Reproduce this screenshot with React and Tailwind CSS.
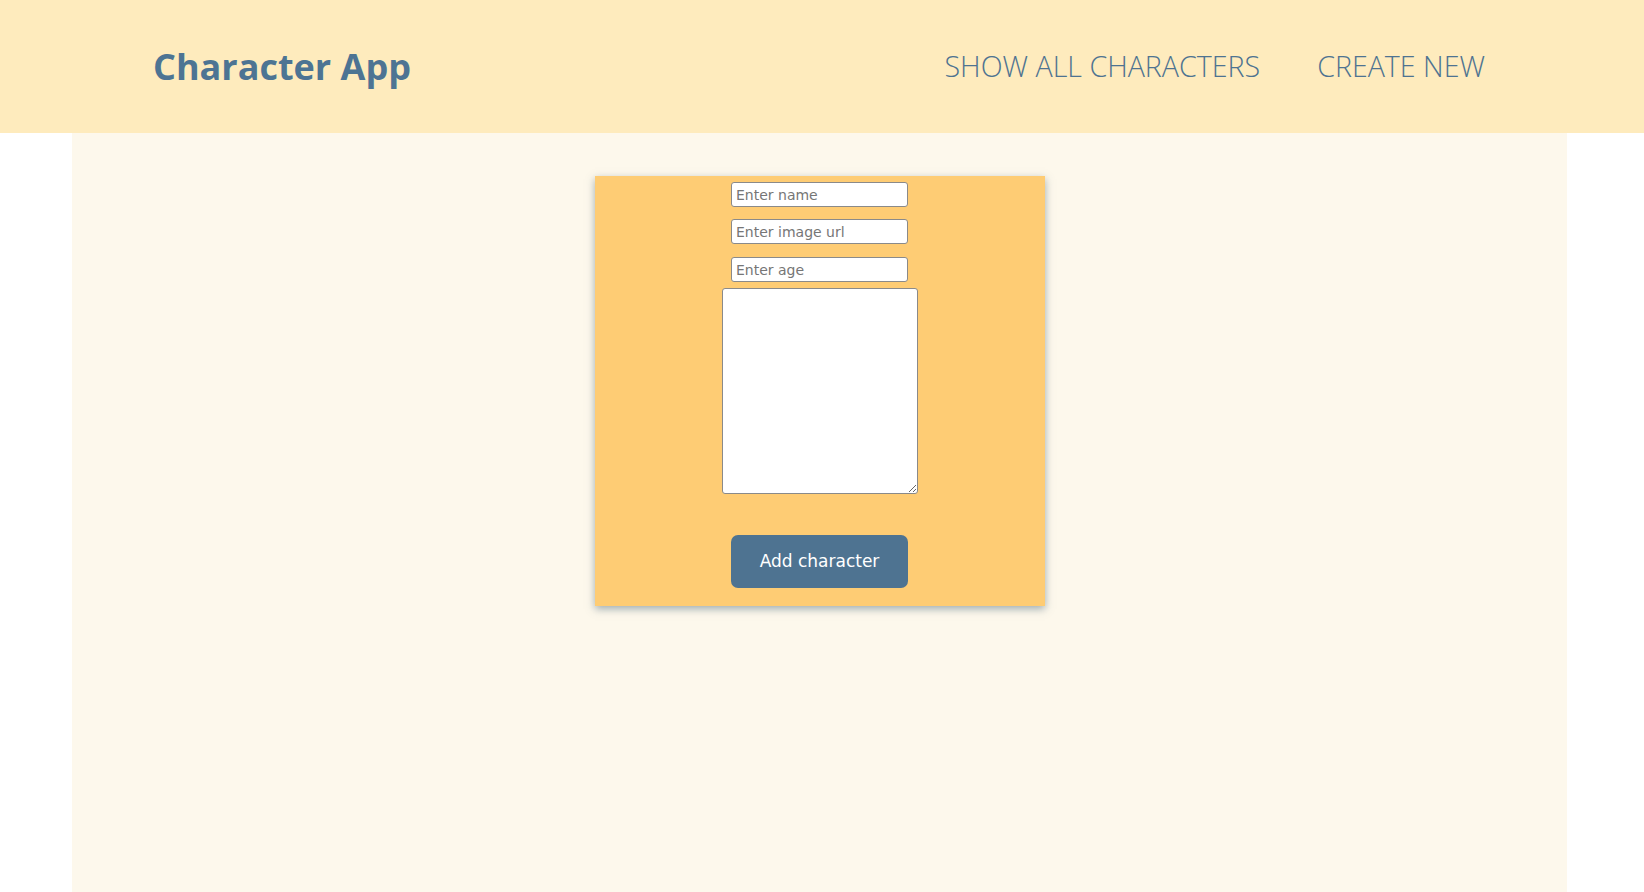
import React, { useState } from 'react';

const sans = { fontFamily: '"Open Sans", "Noto Sans", sans-serif' };
const field = { fontFamily: '"DejaVu Sans", Verdana, sans-serif' };

export default function App() {
  const [form, setForm] = useState({ name: '', image: '', age: '', description: '' });

  const update = (key) => (e) => setForm({ ...form, [key]: e.target.value });

  return (
    <div className="min-h-screen flex flex-col bg-white" style={sans}>
      <header className="h-[133px] shrink-0 bg-[#feebbd] flex items-center justify-between pl-[153px] pr-[159px]">
        <h1 className="text-[36px] font-bold text-[#4d7493] leading-none">Character App</h1>
        <nav className="flex items-center gap-[57px] text-[28.6px] font-[350] text-[#4e7391] leading-none">
          <a href="#">SHOW ALL CHARACTERS</a>
          <a href="#">CREATE NEW</a>
        </nav>
      </header>

      <main className="ml-[72px] w-[1495px] flex-1 bg-[#fdf8ec] pt-[43px]">
        <form
          onSubmit={(e) => e.preventDefault()}
          className="mx-auto w-[450px] bg-[#fecc74] shadow-[0_3px_8px_rgba(70,100,120,0.5)] flex flex-col items-center pt-[6px] pb-[18px]"
          style={field}
        >
          <input
            type="text"
            placeholder="Enter name"
            value={form.name}
            onChange={update('name')}
            className="w-[177px] h-[25px] bg-white border border-[#8a8a8a] rounded-[3px] px-[4px] text-[14px] text-black placeholder:text-[#767676] outline-none"
          />
          <input
            type="text"
            placeholder="Enter image url"
            value={form.image}
            onChange={update('image')}
            className="mt-[12px] w-[177px] h-[25px] bg-white border border-[#8a8a8a] rounded-[3px] px-[4px] text-[14px] text-black placeholder:text-[#767676] outline-none"
          />
          <input
            type="text"
            placeholder="Enter age"
            value={form.age}
            onChange={update('age')}
            className="mt-[13px] w-[177px] h-[25px] bg-white border border-[#8a8a8a] rounded-[3px] px-[4px] text-[14px] text-black placeholder:text-[#767676] outline-none"
          />
          <textarea
            value={form.description}
            onChange={update('description')}
            className="mt-[6px] w-[196px] h-[206px] bg-white border border-[#8a8a8a] rounded-[3px] text-[14px] outline-none"
          />
          <button
            type="submit"
            className="mt-[41px] w-[177px] h-[53px] bg-[#4e7391] rounded-[7px] text-white text-[17px]"
          >
            Add character
          </button>
        </form>
      </main>
    </div>
  );
}
